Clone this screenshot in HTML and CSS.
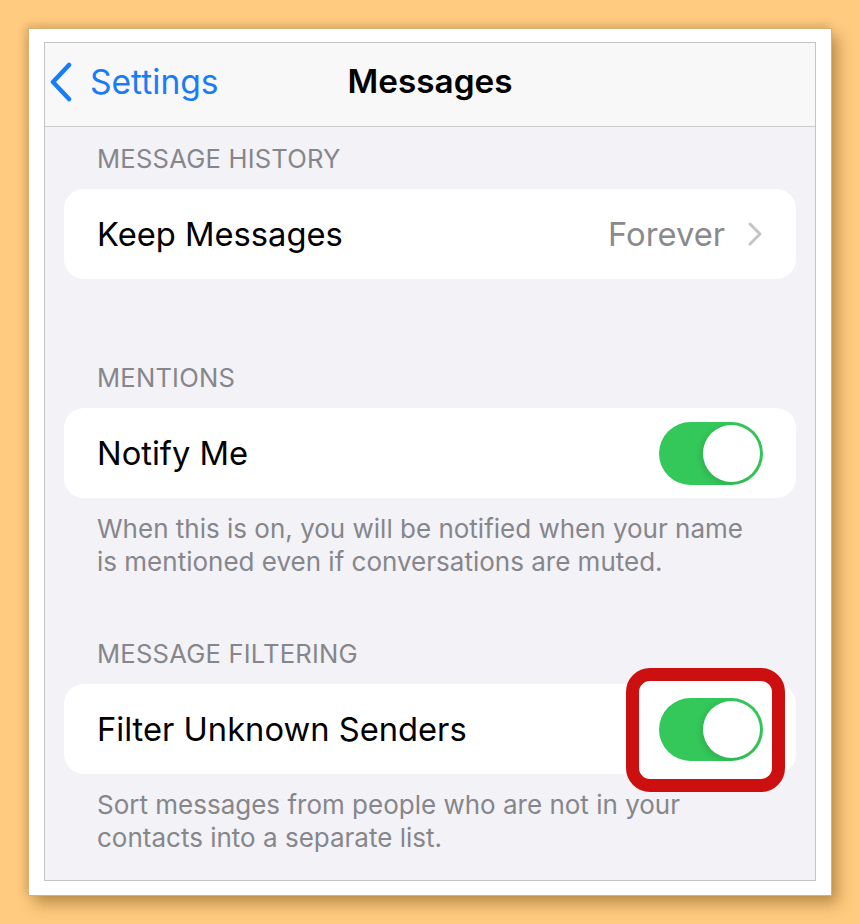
FILE: index.html
```html
<!DOCTYPE html>
<html lang="en">

<head>
    <meta charset="UTF-8">
    <meta name="viewport" content="width=device-width, initial-scale=1.0">
    <title>Messages</title>
    <link rel="stylesheet" href="styles.css">
</head>

<body>
    <div class="frame">
        <div class="screen">
            <div class="nav-bar">
                <a class="back-btn" href="#">
                    <svg class="back-icon" width="26" height="40" viewBox="0 0 26 40">
                        <path d="M21 3 L5 20 L21 37" fill="none" stroke="#1a7cf6" stroke-width="4.5"
                            stroke-linecap="round" stroke-linejoin="round" />
                    </svg>
                    <span>Settings</span>
                </a>
                <h1>Messages</h1>
            </div>

            <div class="group">
                <div class="group-head">Message History</div>
                <div class="card">
                    <span class="label">Keep Messages</span>
                    <span class="value">Forever
                        <svg class="chevron" width="16" height="26" viewBox="0 0 16 26">
                            <path d="M3 3 L13 13 L3 23" fill="none" stroke="#c4c4c7" stroke-width="3"
                                stroke-linecap="round" stroke-linejoin="round" />
                        </svg>
                    </span>
                </div>
            </div>

            <div class="group group-gap">
                <div class="group-head">Mentions</div>
                <div class="card">
                    <span class="label">Notify Me</span>
                    <div class="switch on"><span class="knob"></span></div>
                </div>
                <p class="group-foot">When this is on, you will be notified when your name is mentioned even if
                    conversations are muted.</p>
            </div>

            <div class="group">
                <div class="group-head">Message Filtering</div>
                <div class="card">
                    <span class="label">Filter Unknown Senders</span>
                    <div class="switch-wrap">
                        <div class="mark"></div>
                        <div class="switch on"><span class="knob"></span></div>
                    </div>
                </div>
                <p class="group-foot">Sort messages from people who are not in your contacts into a separate list.</p>
            </div>
        </div>
    </div>
</body>

</html>
```

FILE: styles.css
```css
* {
    margin: 0;
    padding: 0;
    box-sizing: border-box;
    list-style: none;
    text-decoration: none;
    font-family: Inter, "Noto Sans", sans-serif;
}

body {
    background-color: #ffcb80;
    padding: 28px;
}

.frame {
    width: 804px;
    height: 868px;
    background-color: white;
    border: 1px solid #d8b078;
    padding: 13px 15px 15px 15px;
    box-shadow: 6px 8px 14px rgba(110, 70, 10, 0.45), -3px -3px 8px rgba(110, 70, 10, 0.2);
}

.screen {
    height: 839px;
    background-color: #f2f2f7;
    border: 1px solid #c4c4c6;
    overflow: hidden;
}

.nav-bar {
    height: 84px;
    background-color: #f8f8f9;
    border-bottom: 1px solid #cbcbce;
    display: flex;
    align-items: center;
    justify-content: center;
    position: relative;
}

.back-btn {
    position: absolute;
    left: 3px;
    top: 18px;
    display: flex;
    align-items: center;
    gap: 16px;
    color: #1a7cf6;
    font-size: 33.6px;
}

.nav-bar h1 {
    font-size: 33.3px;
    font-weight: 600;
    color: black;
    margin-top: -7px;
}

.group-head {
    height: 62px;
    padding: 0 0 0 52px;
    display: flex;
    align-items: center;
    font-size: 25.6px;
    text-transform: uppercase;
    color: #86868b;
    letter-spacing: 0.2px;
}

.group-gap {
    margin-top: 67px;
}

.card {
    margin: 0 19px;
    height: 90px;
    background-color: white;
    border-radius: 20px;
    padding: 0 33px 0 33px;
    display: flex;
    align-items: center;
    justify-content: space-between;
}

.label {
    font-size: 32.7px;
    color: black;
}

.value {
    font-size: 32.7px;
    color: #8a8a8e;
    display: flex;
    align-items: center;
    gap: 22px;
}

.switch {
    width: 104px;
    height: 63px;
    border-radius: 32px;
    background-color: #e5e5ea;
    padding: 3px;
    position: relative;
    z-index: 1;
}

.switch.on {
    background-color: #34c759;
}

.knob {
    display: block;
    width: 57px;
    height: 57px;
    border-radius: 50%;
    background-color: white;
    box-shadow: -2px 2px 6px rgba(0, 0, 0, 0.12);
}

.switch.on .knob {
    margin-left: auto;
}

.switch-wrap {
    position: relative;
}

.mark {
    position: absolute;
    left: -33px;
    right: -22px;
    top: -30px;
    bottom: -31px;
    background-color: white;
    border: 13px solid #cc1010;
    border-radius: 24px;
}

.group-foot {
    padding: 14px 56px 0 52px;
    font-size: 26px;
    line-height: 33px;
    color: #86868b;
    margin-bottom: 44px;
}
```
